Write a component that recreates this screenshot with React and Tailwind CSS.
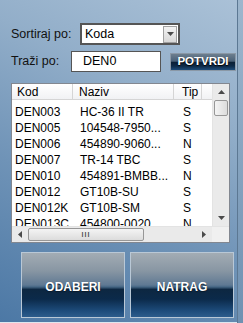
import { useState } from "react";

const ROWS = [
  { kod: "DEN003", naziv: "HC-36 II TR", tip: "S" },
  { kod: "DEN005", naziv: "104548-7950...", tip: "S" },
  { kod: "DEN006", naziv: "454890-9060...", tip: "N" },
  { kod: "DEN007", naziv: "TR-14 TBC", tip: "S" },
  { kod: "DEN010", naziv: "454891-BMBB...", tip: "N" },
  { kod: "DEN012", naziv: "GT10B-SU", tip: "S" },
  { kod: "DEN012K", naziv: "GT10B-SM", tip: "S" },
  { kod: "DEN013C", naziv: "454800-0020", tip: "N" },
];

function Arrow({ dir }) {
  const pts = {
    up: "0,4 3.5,0 7,4",
    down: "0,0 3.5,4 7,0",
    left: "4,0 0,3.5 4,7",
    right: "0,0 4,3.5 0,7",
  }[dir];
  const vertical = dir === "up" || dir === "down";
  return (
    <svg width={vertical ? 7 : 4} height={vertical ? 4 : 7}>
      <polygon points={pts} fill="#4a4a4a" />
    </svg>
  );
}

function List() {
  return (
    <div className="mt-[11px] w-[219px] h-[160px] border border-[#828790] bg-white flex flex-col">
      <div className="flex flex-1 min-h-0">
        <div className="flex-1 min-w-0 flex flex-col overflow-hidden">
          <div className="flex h-[16px] shrink-0 text-[12px] leading-[16px] bg-[linear-gradient(#ffffff,#f1f2f4)] border-b border-[#d5d5d5]">
            <div className="w-[61px] pl-[5px] border-r border-[#d5d5d5]">Kod</div>
            <div className="w-[101px] pl-[6px] border-r border-[#d5d5d5]">Naziv</div>
            <div className="w-[28px] pl-[8px] border-r border-[#d5d5d5]">Tip</div>
            <div className="flex-1" />
          </div>
          <div className="pt-[4px] overflow-hidden flex-1">
            {ROWS.map((r) => (
              <div key={r.kod} className="flex h-[16px] text-[12px] leading-[16px] text-black">
                <div className="w-[61px] pl-[3px] whitespace-nowrap">{r.kod}</div>
                <div className="w-[101px] pl-[7px] whitespace-nowrap">{r.naziv}</div>
                <div className="w-[28px] pl-[9px]">{r.tip}</div>
              </div>
            ))}
          </div>
        </div>
        {/* vertical scrollbar */}
        <div className="w-[17px] flex flex-col bg-[#eaeaea] border-l border-[#e3e3e3]">
          <div className="h-[16px] flex items-center justify-center"><Arrow dir="up" /></div>
          <div className="mx-[1px] h-[16px] rounded-[2px] border border-[#979797] bg-[linear-gradient(90deg,#f4f4f4,#dcdcdc)]" />
          <div className="flex-1" />
          <div className="h-[16px] flex items-center justify-center"><Arrow dir="down" /></div>
        </div>
      </div>
      {/* horizontal scrollbar */}
      <div className="h-[16px] flex bg-[#eaeaea] border-t border-[#e3e3e3]">
        <div className="w-[16px] flex items-center justify-center"><Arrow dir="left" /></div>
        <div className="w-[116px] my-[1px] rounded-[2px] border border-[#979797] bg-[linear-gradient(#f4f4f4,#dcdcdc)] flex items-center justify-center">
          <span className="text-[7px] leading-none tracking-[1px] text-[#555] font-bold">III</span>
        </div>
        <div className="flex-1" />
        <div className="w-[16px] flex items-center justify-center"><Arrow dir="right" /></div>
        <div className="w-[17px] bg-[#f0f0f0]" />
      </div>
    </div>
  );
}

function BigButton({ label }) {
  return (
    <button className="w-[104px] h-[66px] border border-[#b9c8d6] bg-[linear-gradient(#a3acb4_0%,#8896a3_28%,#5f7993_50%,#456684_53%,#0d2741_57%,#0b2a4a_72%,#1d4b7a_90%,#2c5c8c_100%)] text-white text-[12px] font-bold pt-[3px] [text-shadow:0_1px_1px_#0a1a2a]">
      {label}
    </button>
  );
}

export default function App() {
  const [sort] = useState("Koda");
  const [query, setQuery] = useState("DEN0");

  return (
    <div className="w-[243px] h-[323px] flex font-['Liberation_Sans',Arial,sans-serif] text-black overflow-hidden">
      <div className="w-[237px] h-full flex flex-col bg-[linear-gradient(205deg,#aac1d7_0%,#92aec9_30%,#6f93b7_62%,#4c78a5_100%)] pl-[11px] pt-[23px] border-b border-[#dfe7ef]">
        <div className="flex items-center">
          <span className="w-[69px] text-[12.5px] text-[#111]">Sortiraj po:</span>
          <div className="w-[100px] h-[22px] border-2 border-[#555] bg-white flex items-center">
            <span className="flex-1 pl-[3px] text-[12.5px]">{sort}</span>
            <div className="w-[14px] h-[17px] mr-[1px] bg-[linear-gradient(#f2f2f2,#d8d8d8)] border border-[#a0a0a0] flex items-center justify-center">
              <Arrow dir="down" />
            </div>
          </div>
        </div>
        <div className="flex items-center mt-[6px]">
          <span className="w-[60px] text-[12.5px] text-[#111]">Traži po:</span>
          <div className="w-[90px] h-[21px] border border-[#555] bg-white flex items-center pl-[11px]">
            <input
              value={query}
              onChange={(e) => setQuery(e.target.value)}
              className="w-full outline-none text-[12.5px] bg-transparent"
            />
          </div>
          <button className="ml-[9px] w-[66px] h-[18px] border border-[#8a98a6] bg-[linear-gradient(#6c7e8e_0%,#4a6178_45%,#0b2036_52%,#0d2a48_75%,#1e4c7a_100%)] text-white text-[11.5px] font-bold leading-none [text-shadow:0_1px_1px_#000]">
            POTVRDI
          </button>
        </div>
        <List />
        <div className="flex gap-[5px] mt-[9px] ml-[10px]">
          <BigButton label="ODABERI" />
          <BigButton label="NATRAG" />
        </div>
      </div>
      <div className="flex-1 h-full border-l border-[#5c7893] bg-[linear-gradient(#9db6cd,#6f91b2)]" />
    </div>
  );
}
